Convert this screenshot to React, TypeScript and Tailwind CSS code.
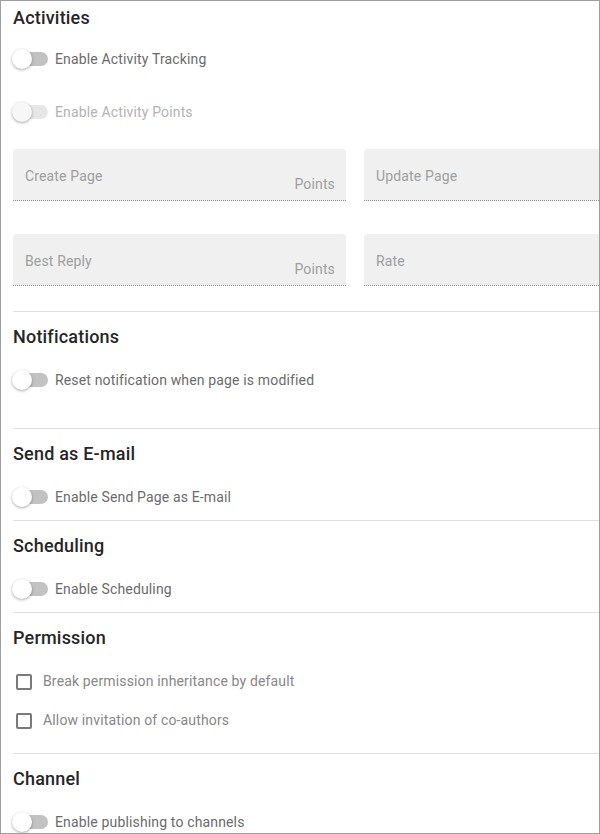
import React from "react";

const font = { fontFamily: "Roboto, 'Noto Sans', sans-serif" };

const Toggle = ({ label, disabled }: { label: string; disabled?: boolean }) => {
  return (
    <div className="flex h-[46px] items-center">
      <div className={"relative h-[14px] w-[35px] rounded-full " + (disabled ? "bg-[#e6e6e6]" : "bg-[#c2c2c2]")}>
        <span
          className={
            "absolute -top-[3px] -left-[1px] h-[20px] w-[20px] rounded-full shadow-[0_1px_3px_rgba(0,0,0,0.35)] " +
            (disabled ? "bg-[#f7f7f7]" : "bg-white")
          }
        />
      </div>
      <span className={"ml-[7px] text-[14px] tracking-[0.15px] " + (disabled ? "text-[#b3b3b3]" : "text-[#6b6b6b]")}>
        {label}
      </span>
    </div>
  );
};

const Check = ({ label }: { label: string }) => {
  return (
    <div className="flex h-[39px] items-center">
      <span className="ml-[3px] h-[16px] w-[16px] rounded-[2px] border-2 border-[#7a7a7a]" />
      <span className="ml-[11px] text-[14px] tracking-[0.15px] text-[#878787]">{label}</span>
    </div>
  );
};

const Field = ({ label, points }: { label: string; points?: boolean }) => {
  return (
    <div className="flex h-[52px] justify-between rounded-t-[4px] border-b border-dotted border-[#8f8f8f] bg-[#f0f0f0] pl-[12px] pr-[11px] text-[14px] leading-[18px] tracking-[0.15px] text-[#9e9e9e]">
      <span className="pt-[18px]">{label}</span>
      {points && <span className="pt-[26px]">Points</span>}
    </div>
  );
};

const Heading = ({ children }: { children: React.ReactNode }) => (
  <h2 className="flex h-[24px] items-center text-[18px] font-medium tracking-[0.2px] text-[#262626]">{children}</h2>
);

export default function App() {
  return (
    <div style={font} className="h-[834px] w-[600px] overflow-hidden border border-[#9e9e9e] bg-white">
      <div className="w-[720px] pl-[12px]">
        <section className="pt-[4px]">
          <Heading>Activities</Heading>
          <div className="mt-[7px]">
            <Toggle label="Enable Activity Tracking" />
          </div>
          <div className="mt-[7px]">
            <Toggle label="Enable Activity Points" disabled />
          </div>
          <div className="mt-[14px] grid grid-cols-[333px_333px] gap-x-[18px] gap-y-[33px]">
            <Field label="Create Page" points />
            <Field label="Update Page" />
            <Field label="Best Reply" points />
            <Field label="Rate" />
          </div>
          <div className="h-[25px]" />
        </section>

        <section className="border-t border-[#e0e0e0] pt-[12px] pb-[25px]">
          <Heading>Notifications</Heading>
          <div className="mt-[9px]">
            <Toggle label="Reset notification when page is modified" />
          </div>
        </section>

        <section className="border-t border-[#e0e0e0] pt-[12px]">
          <Heading>Send as E-mail</Heading>
          <div className="mt-[9px]">
            <Toggle label="Enable Send Page as E-mail" />
          </div>
        </section>

        <section className="border-t border-[#e0e0e0] pt-[12px]">
          <Heading>Scheduling</Heading>
          <div className="mt-[9px]">
            <Toggle label="Enable Scheduling" />
          </div>
        </section>

        <section className="border-t border-[#e0e0e0] pt-[12px] pb-[13px]">
          <Heading>Permission</Heading>
          <div className="mt-[13px]">
            <Check label="Break permission inheritance by default" />
            <Check label="Allow invitation of co-authors" />
          </div>
        </section>

        <section className="border-t border-[#e0e0e0] pt-[12px]">
          <Heading>Channel</Heading>
          <div className="mt-[9px]">
            <Toggle label="Enable publishing to channels" />
          </div>
        </section>
      </div>
    </div>
  );
}
